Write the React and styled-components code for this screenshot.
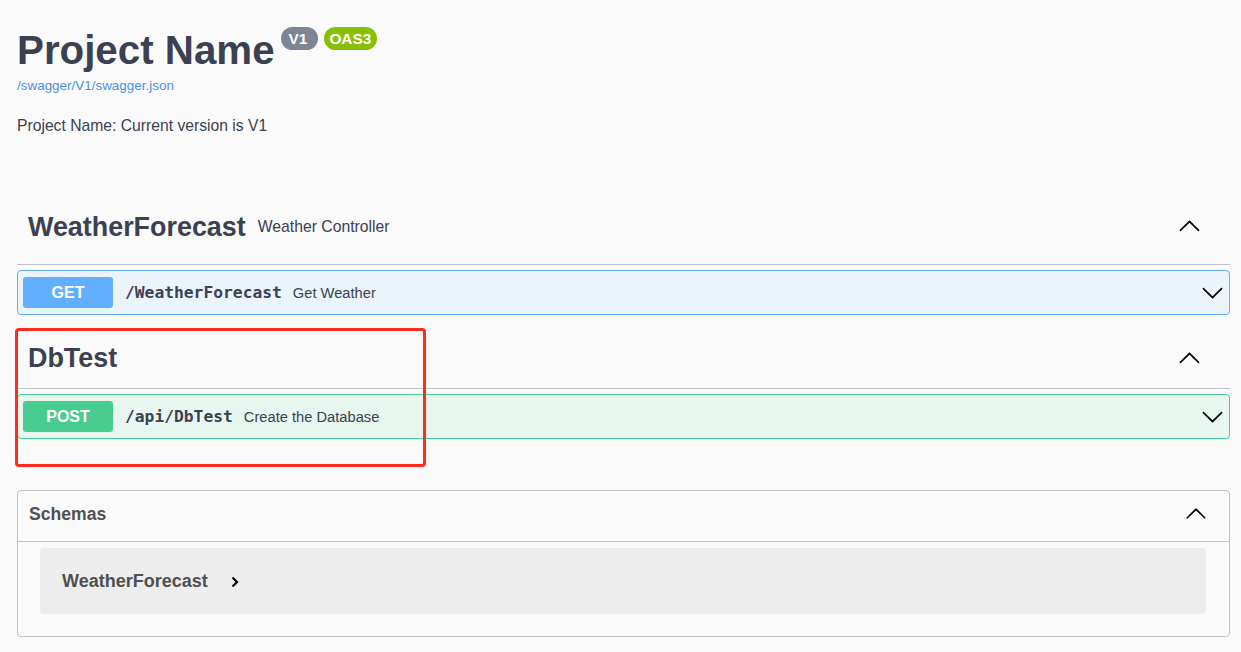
import React from "react";
import styled, { createGlobalStyle } from "styled-components";

const GlobalStyle = createGlobalStyle`
  html, body {
    margin: 0;
    padding: 0;
    background: #fafafa;
  }
  body {
    font-family: "Liberation Sans", Arial, sans-serif;
    color: #3b4151;
  }
  * { box-sizing: border-box; }
`;

const Page = styled.div`
  position: relative;
  padding: 28px 11px 15px 17px;
  min-height: 652px;
`;

const InfoTop = styled.div`
  display: flex;
  align-items: flex-start;
`;

const Title = styled.h2`
  margin: 0;
  font-size: 40.3px;
  line-height: 46px;
  font-weight: 700;
  color: #3b4151;
`;

const Badges = styled.div`
  display: flex;
  gap: 6px;
  margin-left: 6px;
  margin-top: -1px;
`;

const Badge = styled.span`
  display: inline-block;
  height: 23px;
  line-height: 23px;
  padding: ${(p) => p.$pad};
  border-radius: 12px;
  background: ${(p) => p.$bg};
  color: #fff;
  font-size: 15.4px;
  font-weight: 700;
`;

const SpecLink = styled.a`
  display: block;
  margin-top: 4px;
  font-size: 13.45px;
  line-height: 15px;
  color: #4990e2;
  text-decoration: none;
`;

const Description = styled.p`
  margin: 24px 0 0;
  font-size: 15.7px;
  line-height: 18px;
  color: #3b4151;
`;

const TagSection = styled.section`
  margin-top: ${(p) => p.$mt}px;
`;

const TagHeader = styled.h3`
  margin: 0;
  display: flex;
  align-items: center;
  height: ${(p) => p.$h + 1}px;
  padding: 0 29px 0 11px;
  border-bottom: 1px solid #c1c3c7;
`;

const TagName = styled.span`
  font-size: 26.9px;
  line-height: 30px;
  font-weight: 700;
  color: #3b4151;
`;

const TagDesc = styled.small`
  margin-left: 12px;
  font-size: 15.75px;
  font-weight: 400;
  line-height: 18px;
  color: #3b4151;
`;

const Spacer = styled.div`
  flex: 1;
`;

const Opblock = styled.div`
  margin-top: 5px;
  display: flex;
  align-items: center;
  padding: 6px 5px 6px 5px;
  border: 1px solid ${(p) => p.$color};
  background: ${(p) => p.$bg};
  border-radius: 4px;
`;

const Method = styled.span`
  display: inline-block;
  width: 90px;
  height: 31px;
  line-height: 31px;
  text-align: center;
  border-radius: 3px;
  background: ${(p) => p.$color};
  color: #fff;
  font-size: 16px;
  font-weight: 700;
`;

const Path = styled.span`
  padding: 0 11px 0 12px;
  font-family: "DejaVu Sans Mono", "Liberation Mono", monospace;
  font-weight: 700;
  font-size: 16.3px;
  color: #3b4151;
`;

const Summary = styled.span`
  font-size: 14.7px;
  color: #3b4151;
`;

const Models = styled.section`
  margin-top: 51px;
  border: 1px solid #c1c3c7;
  border-radius: 4px;
`;

const ModelsHeader = styled.h4`
  margin: 0;
  display: flex;
  align-items: center;
  height: 51px;
  padding: 0 22px 5px 11px;
  border-bottom: 1px solid #c1c3c7;
  font-size: 17.6px;
  line-height: 20px;
  font-weight: 700;
  color: #505050;
`;

const ModelBox = styled.div`
  margin: 6px 23px 22px 22px;
  height: 66px;
  display: flex;
  align-items: center;
  padding-left: 22px;
  background: #ededed;
  border-radius: 4px;
`;

const ModelName = styled.span`
  font-size: 18px;
  line-height: 20px;
  font-weight: 700;
  color: #505050;
`;

const ModelArrow = styled.svg`
  margin-left: 23px;
  margin-top: 1px;
`;

const Annotation = styled.div`
  position: absolute;
  left: 15px;
  top: 328px;
  width: 411px;
  height: 139px;
  border: 3px solid #fe2b1f;
  border-radius: 4px;
  pointer-events: none;
`;

const ARROW =
  "M17.418 6.109c.272-.268.709-.268.979 0s.271.701 0 .969l-7.908 7.83c-.27.268-.707.268-.979 0l-7.908-7.83c-.27-.268-.27-.701 0-.969.271-.268.709-.268.979 0L10 13.25l7.418-7.141z";

const Chevron = ({ up, size = 23 }) => (
  <svg
    width={size}
    height={size}
    viewBox="0 0 20 20"
    style={up ? { transform: "rotate(180deg)" } : undefined}
  >
    <path d={ARROW} fill="#000" />
  </svg>
);

const Operation = ({ method, color, bg, path, summary }) => (
  <Opblock $color={color} $bg={bg}>
    <Method $color={color}>{method}</Method>
    <Path>{path}</Path>
    <Summary>{summary}</Summary>
    <Spacer />
    <Chevron />
  </Opblock>
);

export default function App() {
  return (
    <>
      <GlobalStyle />
      <Page>
        <InfoTop>
          <Title>Project Name</Title>
          <Badges>
            <Badge $bg="#7d8492" $pad="0 11px 0 8px">V1</Badge>
            <Badge $bg="#89bf04" $pad="0 6px 0 5px">OAS3</Badge>
          </Badges>
        </InfoTop>
        <SpecLink href="#">/swagger/V1/swagger.json</SpecLink>
        <Description>Project Name: Current version is V1</Description>

        <TagSection $mt={54}>
          <TagHeader $h={75}>
            <TagName>WeatherForecast</TagName>
            <TagDesc>Weather Controller</TagDesc>
            <Spacer />
            <Chevron up />
          </TagHeader>
          <Operation
            method="GET"
            color="#61affe"
            bg="#ebf3fb"
            path="/WeatherForecast"
            summary="Get Weather"
          />
        </TagSection>

        <TagSection $mt={13}>
          <TagHeader $h={60}>
            <TagName>DbTest</TagName>
            <Spacer />
            <Chevron up />
          </TagHeader>
          <Operation
            method="POST"
            color="#49cc90"
            bg="#e8f6f0"
            path="/api/DbTest"
            summary="Create the Database"
          />
        </TagSection>

        <Models>
          <ModelsHeader>
            Schemas
            <Spacer />
            <Chevron up size={22} />
          </ModelsHeader>
          <ModelBox>
            <ModelName>WeatherForecast</ModelName>
            <ModelArrow width="8" height="12" viewBox="0 0 8 12">
              <polyline
                points="1.5,1.5 6,6 1.5,10.5"
                fill="none"
                stroke="#000"
                strokeWidth="2.2"
              />
            </ModelArrow>
          </ModelBox>
        </Models>

        <Annotation />
      </Page>
    </>
  );
}
